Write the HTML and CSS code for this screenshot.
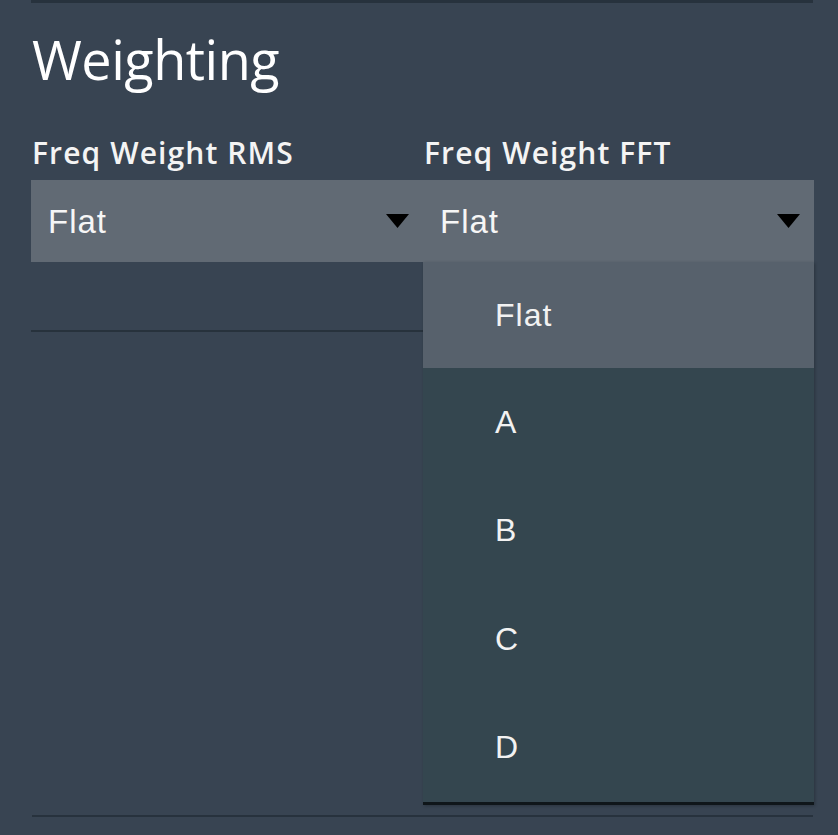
FILE: index.html
```html
<!DOCTYPE html>
<html lang="en">
<head>
<meta charset="utf-8">
<title>Weighting</title>
<link rel="stylesheet" href="styles.css">
</head>
<body>
<div class="panel">
  <div class="rule rule-top"></div>
  <h2 class="title">Weighting</h2>
  <div class="fields">
    <div class="field">
      <div class="label">Freq Weight RMS</div>
      <div class="select">
        <span class="value">Flat</span>
        <svg class="caret" width="23" height="14" viewBox="0 0 23 14"><path d="M0 0H23L11.5 14Z" fill="#000"/></svg>
      </div>
      <div class="underline"></div>
    </div>
    <div class="field">
      <div class="label">Freq Weight FFT</div>
      <div class="select">
        <span class="value">Flat</span>
        <svg class="caret" width="23" height="14" viewBox="0 0 23 14"><path d="M0 0H23L11.5 14Z" fill="#000"/></svg>
      </div>
      <ul class="menu">
        <li class="item active">Flat</li>
        <li class="item">A</li>
        <li class="item">B</li>
        <li class="item">C</li>
        <li class="item">D</li>
      </ul>
    </div>
  </div>
  <div class="rule rule-bottom"></div>
</div>
</body>
</html>
```
FILE: styles.css
```css
html, body {
  margin: 0;
  padding: 0;
  background: #384452;
  height: 100%;
}
body {
  font-family: "Open Sans", "Noto Sans", sans-serif;
  color: #f4f4f4;
  overflow: hidden;
}
.panel {
  padding-left: 31px;
  width: 783px;
}
.rule {
  background: #27323d;
}
.rule-top {
  height: 3px;
  width: 782px;
}
.title {
  margin: 21px 0 0 1px;
  font-size: 54px;
  line-height: 70px;
  height: 70px;
  font-weight: 400;
  color: #ffffff;
  letter-spacing: -0.5px;
}
.fields {
  display: grid;
  grid-template-columns: 392px 391px;
  margin-top: 41px;
  height: 680px;
}
.field {
  position: relative;
}
.label {
  font-size: 30px;
  line-height: 36px;
  height: 36px;
  font-weight: 600;
  padding-left: 1px;
  letter-spacing: 1.1px;
  white-space: nowrap;
}
.select {
  margin-top: 9px;
  height: 82px;
  background: #616a74;
  display: flex;
  align-items: center;
  justify-content: space-between;
  padding: 0 14px 0 17px;
  box-sizing: border-box;
  font-family: "Liberation Sans", Arial, sans-serif;
  font-size: 33px;
  letter-spacing: 1px;
  color: #f6f6f6;
}
.value {
  position: relative;
  top: 1px;
}
.caret {
  display: block;
}
.underline {
  margin-top: 68px;
  height: 2px;
  background: #27323c;
}
.menu {
  position: absolute;
  left: 0;
  top: 127px;
  width: 391px;
  margin: 0;
  padding: 0;
  list-style: none;
  background: #34464f;
  border-bottom: 3px solid #0f161a;
  box-shadow: 1px 1px 3px rgba(0, 0, 0, 0.25);
  font-family: "Liberation Sans", Arial, sans-serif;
  font-size: 32px;
  letter-spacing: 1px;
  color: #f2f2f2;
}
.item {
  height: 108.5px;
  display: flex;
  align-items: center;
  padding-left: 72px;
}
.item.active {
  background: #57616c;
  height: 106px;
}
.rule-bottom {
  margin-left: 1px;
  height: 2px;
  width: 781px;
}
```
